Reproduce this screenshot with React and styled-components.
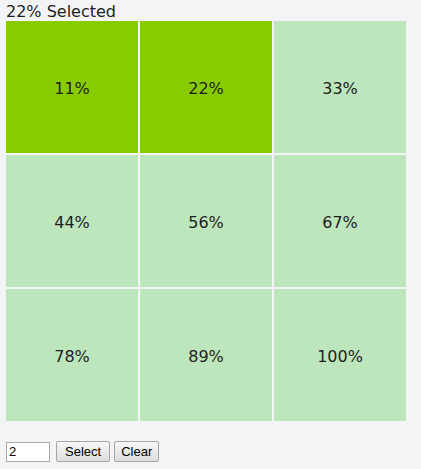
import React, { useState } from 'react'
import styled, { createGlobalStyle } from 'styled-components'

const GlobalStyle = createGlobalStyle`
  html, body {
    margin: 0;
    padding: 0;
    background: #f3f4f6;
  }
`

const Page = styled.div`
  padding: 0 6px;
  font-family: "DejaVu Sans", Verdana, sans-serif;
  color: #1e1e1e;
`

const Title = styled.div`
  font-size: 16px;
  line-height: 18px;
  padding-top: 3px;
`

const Grid = styled.div`
  display: grid;
  grid-template-columns: repeat(3, 132px);
  grid-auto-rows: 132px;
  gap: 2px;
  width: 400px;
`

const Cell = styled.div`
  display: flex;
  align-items: center;
  justify-content: center;
  padding-top: 2px;
  font-size: 16px;
  background: ${(p) => (p.selected ? '#88cc00' : '#bde6bd')};
  cursor: pointer;
`

const Controls = styled.div`
  display: flex;
  align-items: center;
  margin-top: 20px;
  font-family: "Liberation Sans", Arial, sans-serif;
  font-size: 13px;
`

const Input = styled.input`
  box-sizing: border-box;
  width: 44px;
  height: 20px;
  padding: 1px 2px;
  border: 1px solid #a9a9a9;
  background: #fff;
  font: inherit;
  color: #000;
  margin-right: 6px;
  outline: none;
`

const Button = styled.button`
  box-sizing: border-box;
  height: 21px;
  padding: 0 ${(p) => p.pad}px;
  margin-right: 4px;
  border: 1px solid #a6a6a6;
  border-radius: 2px;
  background: linear-gradient(#f7f7f7, #dddddd);
  font: inherit;
  color: #000;
  cursor: pointer;
`

const TOTAL = 9

const App = () => {
  const [value, setValue] = useState('2')
  const [count, setCount] = useState(2)

  const cells = Array.from({ length: TOTAL }, (_, i) => Math.round(((i + 1) / TOTAL) * 100))
  const pct = Math.round((count / TOTAL) * 100)

  const select = () => {
    const n = parseInt(value, 10)
    setCount(isNaN(n) ? 0 : Math.max(0, Math.min(TOTAL, n)))
  }

  return (
    <Page>
      <GlobalStyle />
      <Title>{pct}% Selected</Title>
      <Grid>
        {cells.map((c, i) => (
          <Cell key={i} selected={i < count} onClick={() => setCount(i + 1)}>
            {c}%
          </Cell>
        ))}
      </Grid>
      <Controls>
        <Input value={value} onChange={(e) => setValue(e.target.value)} />
        <Button pad={8} onClick={select}>Select</Button>
        <Button pad={6} onClick={() => { setCount(0); setValue('') }}>Clear</Button>
      </Controls>
    </Page>
  )
}

export default App
